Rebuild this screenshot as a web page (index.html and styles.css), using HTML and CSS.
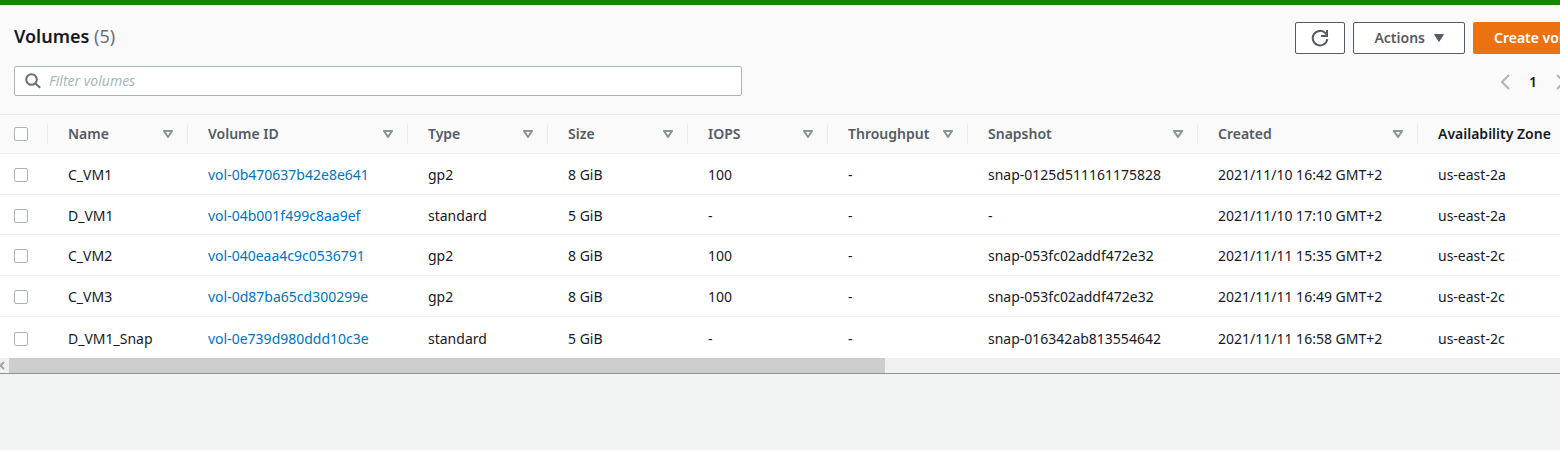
FILE: index.html
```html
<!DOCTYPE html>
<html lang="en">
<head>
<meta charset="utf-8">
<title>Volumes</title>
<link rel="stylesheet" href="styles.css">
</head>
<body>
<div class="flash"></div>
<main class="panel">
  <header class="panel-header">
    <div class="title-row">
      <h1 class="title">Volumes <span class="count">(5)</span></h1>
      <div class="actions">
        <button class="btn btn-icon" type="button" aria-label="Refresh">
          <svg width="18" height="18" viewBox="0 0 18 18" fill="none" stroke="currentColor" stroke-width="2"><path d="M16.3 10.2A7.3 7.3 0 1 1 14.6 4.4L16 6"/><path d="M16 1v6h-6"/></svg>
        </button>
        <button class="btn" type="button">Actions
          <svg width="10" height="8" viewBox="0 0 10 8" fill="currentColor" stroke="currentColor" stroke-linejoin="round"><path d="M.6.6h8.8L5 7.4z"/></svg>
        </button>
        <button class="btn btn-primary" type="button">Create volume</button>
      </div>
    </div>
    <div class="filter-row">
      <label class="filter">
        <svg width="16" height="16" viewBox="0 0 16 16" fill="none" stroke="currentColor" stroke-width="2"><circle cx="6.5" cy="6.5" r="5.3"/><path d="M10.4 10.4l4.8 4.4"/></svg>
        <input type="text" placeholder="Filter volumes" aria-label="Filter volumes">
      </label>
      <nav class="pager" aria-label="Pages">
        <button type="button" aria-label="Previous page"><svg width="10" height="16" viewBox="0 0 10 16" fill="none" stroke="currentColor" stroke-width="2"><path d="M9 1L2 8l7 7"/></svg></button>
        <button class="current" type="button">1</button>
        <button type="button" aria-label="Next page"><svg width="10" height="16" viewBox="0 0 10 16" fill="none" stroke="currentColor" stroke-width="2"><path d="M1 1l7 7-7 7"/></svg></button>
      </nav>
    </div>
  </header>
  <table class="volumes">
    <colgroup>
      <col class="w-check"><col class="w-s"><col class="w-m"><col class="w-s"><col class="w-s"><col class="w-s"><col class="w-s"><col class="w-l"><col class="w-m"><col>
    </colgroup>
    <thead>
      <tr>
        <th class="check"><div class="cell"><input type="checkbox" aria-label="Select all"></div></th>
        <th><div class="cell">Name <svg class="sort" viewBox="0 0 10 8"><path d="M1 1h8L5 7z"/></svg></div></th>
        <th><div class="cell">Volume ID <svg class="sort" viewBox="0 0 10 8"><path d="M1 1h8L5 7z"/></svg></div></th>
        <th><div class="cell">Type <svg class="sort" viewBox="0 0 10 8"><path d="M1 1h8L5 7z"/></svg></div></th>
        <th><div class="cell">Size <svg class="sort" viewBox="0 0 10 8"><path d="M1 1h8L5 7z"/></svg></div></th>
        <th><div class="cell">IOPS <svg class="sort" viewBox="0 0 10 8"><path d="M1 1h8L5 7z"/></svg></div></th>
        <th><div class="cell">Throughput <svg class="sort" viewBox="0 0 10 8"><path d="M1 1h8L5 7z"/></svg></div></th>
        <th><div class="cell">Snapshot <svg class="sort" viewBox="0 0 10 8"><path d="M1 1h8L5 7z"/></svg></div></th>
        <th><div class="cell">Created <svg class="sort" viewBox="0 0 10 8"><path d="M1 1h8L5 7z"/></svg></div></th>
        <th class="plain"><div class="cell">Availability Zone</div></th>
      </tr>
    </thead>
    <tbody>
      <tr><td class="check"><input type="checkbox" aria-label="Select C_VM1"></td><td>C_VM1</td><td><a href="#">vol-0b470637b42e8e641</a></td><td>gp2</td><td>8 GiB</td><td>100</td><td>-</td><td>snap-0125d511161175828</td><td>2021/11/10 16:42 GMT+2</td><td>us-east-2a</td></tr>
      <tr><td class="check"><input type="checkbox" aria-label="Select D_VM1"></td><td>D_VM1</td><td><a href="#">vol-04b001f499c8aa9ef</a></td><td>standard</td><td>5 GiB</td><td>-</td><td>-</td><td>-</td><td>2021/11/10 17:10 GMT+2</td><td>us-east-2a</td></tr>
      <tr><td class="check"><input type="checkbox" aria-label="Select C_VM2"></td><td>C_VM2</td><td><a href="#">vol-040eaa4c9c0536791</a></td><td>gp2</td><td>8 GiB</td><td>100</td><td>-</td><td>snap-053fc02addf472e32</td><td>2021/11/11 15:35 GMT+2</td><td>us-east-2c</td></tr>
      <tr><td class="check"><input type="checkbox" aria-label="Select C_VM3"></td><td>C_VM3</td><td><a href="#">vol-0d87ba65cd300299e</a></td><td>gp2</td><td>8 GiB</td><td>100</td><td>-</td><td>snap-053fc02addf472e32</td><td>2021/11/11 16:49 GMT+2</td><td>us-east-2c</td></tr>
      <tr><td class="check"><input type="checkbox" aria-label="Select D_VM1_Snap"></td><td>D_VM1_Snap</td><td><a href="#">vol-0e739d980ddd10c3e</a></td><td>standard</td><td>5 GiB</td><td>-</td><td>-</td><td>snap-016342ab813554642</td><td>2021/11/11 16:58 GMT+2</td><td>us-east-2c</td></tr>
    </tbody>
  </table>
  <div class="scrollbar">
    <svg width="9" height="15" viewBox="0 0 9 15" fill="none" stroke="#a3a3a3" stroke-width="2"><path d="M4 4L.5 7.5 4 11"/></svg>
    <div class="thumb"></div>
  </div>
</main>
</body>
</html>
```

FILE: styles.css
```css
* { box-sizing: border-box; }

body {
  margin: 0;
  overflow: hidden;
  background: #f2f3f3;
  color: #16191f;
  font: 14px/20px "Noto Sans", "Open Sans", sans-serif;
}

button, input { font: inherit; }

.flash { height: 5px; background: #1d8102; }

/* The panel runs past the right edge of the window. */
.panel {
  width: calc(100% + 50px);
  border-bottom: 1px solid #879596;
  background: #fff;
}

.panel-header {
  padding: 17px 0 18px 14px;
  background: #fafafa;
}

.title-row, .filter-row {
  display: flex;
  align-items: center;
  justify-content: space-between;
}

.title-row { align-items: flex-start; }

.filter-row { margin-top: 12px; }

.title {
  margin: 0;
  padding-top: 2px;
  font-size: 18px;
  line-height: 24px;
  font-weight: 600;
}

.count { color: #687078; font-weight: 400; }

.actions { display: flex; gap: 8px; }

.btn {
  display: flex;
  align-items: center;
  gap: 9px;
  height: 32px;
  padding: 0 20px;
  border: 1px solid #545b64;
  border-radius: 2px;
  background: #fff;
  color: #545b64;
  font-weight: 600;
  white-space: nowrap;
}

.btn-icon { padding: 0 15px; }

.btn-primary {
  width: 137px;
  border-color: #ec7211;
  background: #ec7211;
  color: #fff;
}

.filter {
  display: flex;
  align-items: center;
  gap: 8px;
  width: 728px;
  height: 30px;
  padding: 0 10px;
  border: 1px solid #aab7b8;
  border-radius: 2px;
  background: #fff;
  color: #687078;
}

.filter input {
  flex: 1;
  padding: 0;
  border: 0;
  outline: 0;
  background: none;
  color: #16191f;
}

.filter input::placeholder { color: #aab7b8; font-style: italic; }

.pager {
  display: flex;
  align-items: center;
  gap: 19px;
  padding: 2px 44px 0 0;
}

.pager button {
  display: flex;
  padding: 0;
  border: 0;
  background: none;
  color: #aab7b8;
}

.pager .current { color: #16191f; font-weight: 600; }

.volumes {
  width: 100%;
  table-layout: fixed;
  border-collapse: separate;
  border-spacing: 0;
}

.w-check { width: 48px; }
.w-s { width: 140px; }
.w-m { width: 220px; }
.w-l { width: 230px; }

.volumes th, .volumes td {
  padding: 0 0 0 20px;
  text-align: left;
  white-space: nowrap;
}

.volumes th {
  height: 40px;
  padding-left: 0;
  border-top: 1px solid #eaeded;
  border-bottom: 1px solid #eaeded;
  background: #fafafa;
  color: #545b64;
  font-weight: 600;
}

.volumes th.plain { color: #16191f; }

.cell {
  display: flex;
  align-items: center;
  justify-content: space-between;
  padding: 0 14px 0 20px;
  border-right: 1px solid #eaeded;
}

.plain .cell { border-right: 0; }

.check .cell { padding: 0 0 0 14px; }

.sort {
  flex: none;
  width: 10px;
  height: 8px;
  fill: none;
  stroke: #879596;
  stroke-width: 2;
}

.volumes td {
  height: 41px;
  padding-top: 2px;
  border-bottom: 1px solid #eaeded;
}

.volumes td.check { padding-left: 14px; }

.volumes tbody tr:nth-child(2) td { height: 40px; }

.volumes tbody tr:last-child td { border-bottom: 0; }

.volumes a { color: #0073bb; text-decoration: none; }

.volumes input {
  display: block;
  width: 14px;
  height: 14px;
  margin: 0;
  appearance: none;
  border: 1px solid #aab7b8;
  border-radius: 2px;
  background: #fff;
}

.cell input { margin: 3px 0; }

.scrollbar { display: flex; height: 15px; background: #f0f0f0; }

.thumb { width: 876px; background: #cdcdcd; }
```
